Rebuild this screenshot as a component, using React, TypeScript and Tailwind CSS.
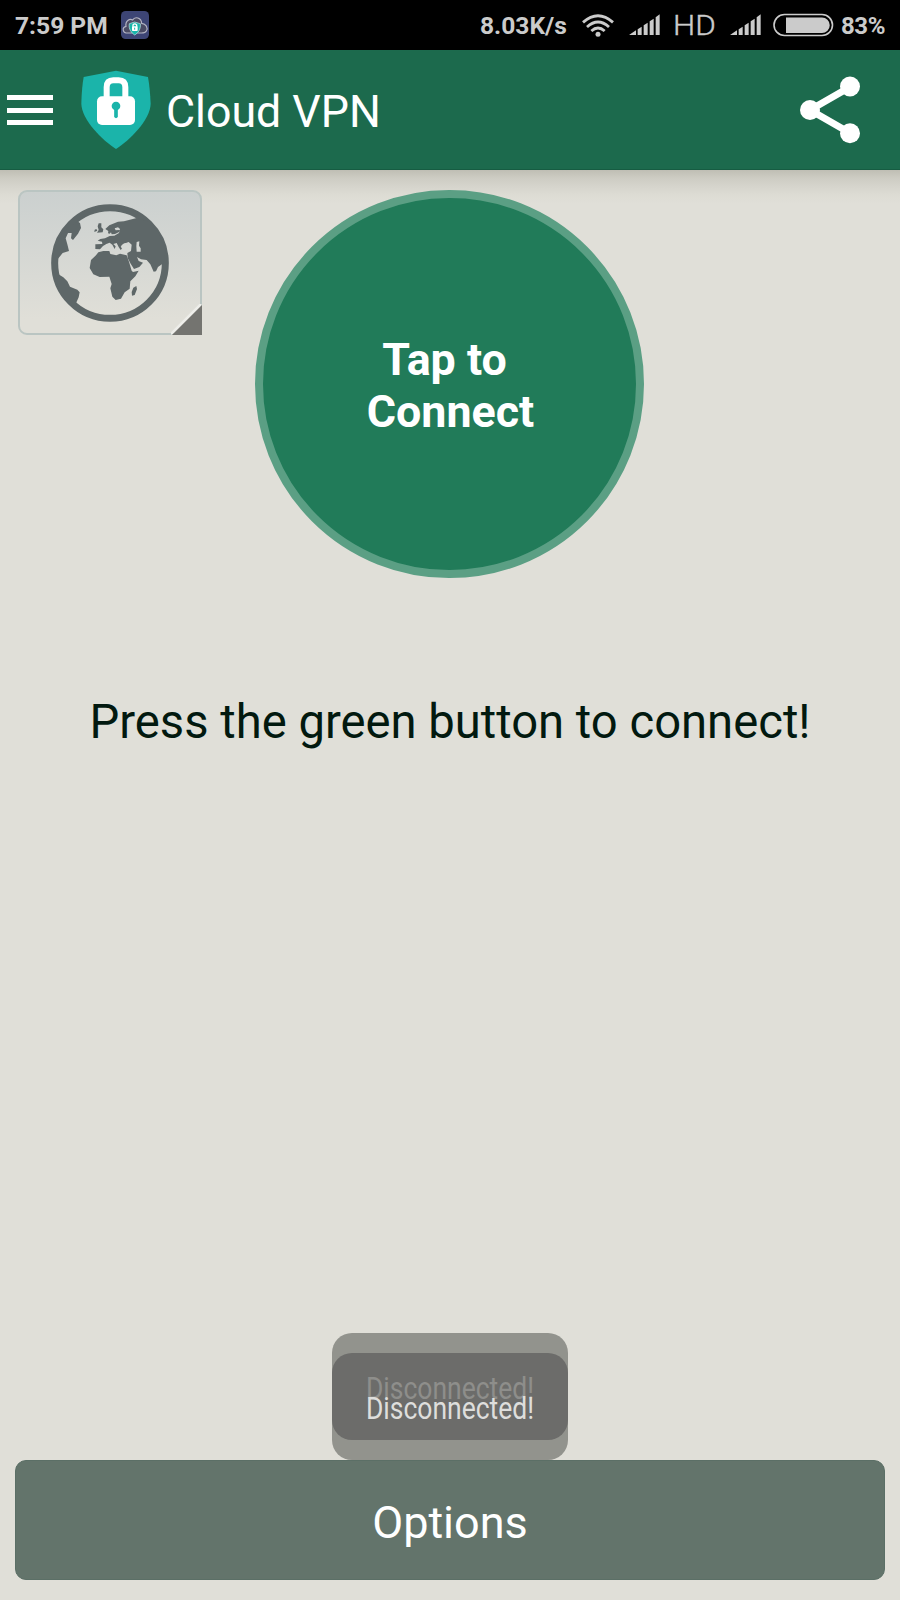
import React from "react";

function Signal() {
  return (
    <svg width="32" height="22" viewBox="0 0 96 66" fill="#cbcbcb">
      <path d="M0 63 L21 49 V63Z M26 46 L38 38 V63 H26Z M44 34 L56 26 V63 H44Z M62 22 L74 14 V63 H62Z M80 10 L92 1 V63 H80Z" />
    </svg>
  );
}

function StatusBar() {
  return (
    <div className="flex h-[50px] w-full shrink-0 items-center bg-black text-[24.6px] font-bold leading-[48px] text-[#cbcbcb]">
      <span className="ml-[15px] w-[106px] whitespace-nowrap pt-[2px]">7:59 PM</span>
      <svg width="28" height="28" viewBox="0 0 84 84" className="shrink-0">
        <rect width="84" height="84" rx="14" fill="#3d4575" />
        <path d="M22 66 C4 67 2 50 15 46 C12 29 26 22 35 27 C42 15 61 20 62 37 C75 38 82 51 76 60 C73 66 68 66 62 66Z" fill="#4a4b64" stroke="#b4b5c4" strokeWidth="3.5" />
        <path d="M25 38 L41 33 L58 38 C60 57 49 67 41 72 C32 66 22 55 25 38Z" fill="#18b5aa" stroke="#c9e8e8" strokeWidth="2" />
        <path d="M36 47 V42 Q41 35 47 42 V47" fill="none" stroke="white" strokeWidth="4" />
        <rect x="33" y="46" width="17" height="14" rx="2" fill="white" />
        <path d="M41 50 V56" stroke="#18b5aa" strokeWidth="3" />
      </svg>
      <span className="ml-[331px] w-[91px] whitespace-nowrap pt-[2px]">8.03K/s</span>
      <svg width="34" height="24" viewBox="0 0 102 72" className="ml-[10px] shrink-0" fill="none" stroke="#cbcbcb" strokeWidth="8.5">
        <path d="M6 28 Q51 -12 96 28 M18 42 Q51 12 84 42 M31 54 Q51 36 71 54" />
        <circle cx="51" cy="64" r="7.5" fill="#cbcbcb" stroke="none" />
      </svg>
      <span className="ml-[14px] w-[32px] shrink-0"><Signal /></span>
      <span className="ml-[12px] w-[46px] shrink-0 whitespace-nowrap pt-[2px]">
        <span className="block w-[40px] origin-left scale-x-[1.12] text-[28px] font-light [-webkit-text-stroke:0.4px_#cbcbcb]">HD</span>
      </span>
      <span className="ml-[11px] w-[32px] shrink-0"><Signal /></span>
      <svg width="61" height="24" viewBox="0 0 61 24" className="ml-[11px] shrink-0">
        <rect x="1" y="1.5" width="58.5" height="21" rx="10.5" fill="none" stroke="#cbcbcb" strokeWidth="1.6" />
        <path d="M13 4.5 H49 A7.5 7.5 0 0 1 49 20 H13Z" fill="#cbcbcb" />
      </svg>
      <span className="ml-[7px] whitespace-nowrap pt-[2px] text-[24px] tracking-[-0.4px]">83%</span>
    </div>
  );
}

function Header() {
  return (
    <header className="flex h-[120px] w-full shrink-0 items-center border-b border-[#165c42] bg-[#1c6a4d]">
      <button className="ml-[7px] mt-px flex w-[46px] flex-col gap-[7.5px]" aria-label="Menu">
        <span className="h-[5px] w-full bg-white" />
        <span className="h-[5px] w-full bg-white" />
        <span className="h-[5px] w-full bg-white" />
      </button>
      <svg width="70" height="80" viewBox="0 0 210 240" className="ml-[28px] shrink-0">
        <path d="M105 2 L201 21 Q207 55 209 101 C208 150 145 211 105 237 C65 211 2 150 1 101 Q2 55 8 21Z" fill="#1bb4aa" />
        <path d="M77 82 V52 Q77 31 97 31 H113 Q133 31 133 52 V82" fill="none" stroke="white" strokeWidth="18" />
        <rect x="48" y="79" width="114" height="86" rx="15" fill="white" />
        <circle cx="105" cy="108" r="13" fill="#1bb4aa" />
        <path d="M105 109 V139" stroke="#1bb4aa" strokeWidth="11" strokeLinecap="round" />
      </svg>
      <h1 className="ml-[15px] whitespace-nowrap pt-[5px] text-[44.7px] leading-[60px] text-white">Cloud VPN</h1>
      <svg width="60" height="68" viewBox="0 0 60 68" className="ml-auto mr-[40px] mt-px shrink-0" fill="white">
        <path d="M50 11 L10 34 L50 57" fill="none" stroke="white" strokeWidth="7" />
        <circle cx="50" cy="10.5" r="10" /><circle cx="10" cy="34" r="10" /><circle cx="50" cy="57.3" r="10" />
      </svg>
    </header>
  );
}

function Globe() {
  return (
    <svg width="118" height="118" viewBox="153 99 354 354" fill="#5e6768">
      <circle cx="330" cy="276" r="166" fill="none" stroke="#5e6768" strokeWidth="21" />
      <path d="M232 151 L240 156 L243 171 L234 188 L219 207 L213 202 L215 186 L204 186 L197 202 L202 220 L207 240 L188 246 L174 263 L171 276 L174 309 L190 319 L202 331 L210 347 L232 356 L239 364 L236 379 L228 397 L215 404 L180 364 L160 300 L160 242 L190 180 Z" />
      <path d="M410 141 L372 151 L354 152 L328 163 L316 174 L325 180 L324 187 L329 188 L333 184 L335 190 L345 189 L357 183 L359 177 L347 178 L344 172 L354 169 L360 174 L357 186 L343 194 L329 195 L315 202 L301 204 L293 209 L306 212 L307 219 L286 220 L286 234 L300 235 L309 225 L319 219 L329 215 L337 221 L344 234 L347 226 L340 219 L350 216 L356 228 L362 237 L368 230 L362 226 L370 219 L386 213 L395 221 L393 240 L382 246 L383 261 L392 278 L402 294 L418 288 L429 275 L416 270 L411 258 L423 265 L440 267 L451 280 L461 302 L468 301 L474 288 L491 276 L497 240 L475 184 L442 151Z" />
      <path d="M310 240 L328 240 L331 249 L349 253 L360 248 L380 253 L387 272 L395 299 L399 303 L416 299 L406 316 L391 331 L389 353 L374 364 L363 383 L347 387 L337 377 L331 352 L335 339 L328 317 L299 318 L280 310 L269 291 L273 267 L288 253 L295 244Z" />
      <path d="M296 157 L304 157 L304 169 L310 175 L308 184 L291 185 L296 177 L293 166Z M284 176 L289 174 L292 179 L283 183Z M409 345 L411 354 L404 372 L396 374 L395 363 L400 350Z" />
      <path d="M369 219 L377 216 L380 222 L393 225 L392 240 L370 240 L363 228Z M410 213 L418 211 L417 224 L422 232 L422 242 L410 242 L409 226Z" fill="#d6d9d5" />
    </svg>
  );
}

export default function App() {
  return (
    <div className="flex h-[1600px] w-[900px] flex-col overflow-hidden bg-[#e0dfd8] font-['Roboto',sans-serif]">
      <StatusBar />
      <Header />
      <main className="flex flex-1 flex-col">
        <div className="flex h-[407px] items-start bg-[linear-gradient(to_bottom,#bfbeb4_0px,#cdccc3_8px,#d5d4cc_16px,#dddcd4_25px,#e0dfd8_34px)] pt-[20px]">
          <button className="relative ml-[18px] flex h-[145px] w-[184px] items-center justify-center rounded-[9px] rounded-br-none border-2 border-[#bac5c2] bg-[linear-gradient(#cbd0cf,#e0dfd8_90%)]" aria-label="Choose location">
            <Globe />
            <svg className="absolute -bottom-[2px] -right-[2px]" width="31" height="31" viewBox="0 0 31 31">
              <path d="M0 30 L30 0" stroke="#eeeeea" strokeWidth="2.5" />
              <path d="M1 31 L31 1 V31Z" fill="#747470" />
            </svg>
          </button>
          <button className="ml-[53px] flex h-[388px] w-[389px] flex-col items-center justify-center rounded-full border-[8px] border-[#5b9f84] bg-[#217b59] pl-[2px] pt-[4px] text-[44.8px] font-bold leading-[52px] text-white">
            <span className="mr-[12px]">Tap to</span>
            <span>Connect</span>
          </button>
        </div>
        <p className="mt-[115px] whitespace-nowrap text-center text-[47.2px] leading-[60px] text-[#02190f]">Press the green button to connect!</p>
        <div className="mt-auto flex justify-center">
          <div className="relative h-[127px] w-[236px] overflow-hidden rounded-[20px] bg-[#92938d]">
            <div className="absolute left-0 top-[20px] h-[87px] w-full rounded-[20px] bg-[#6c6c6a]" />
            <span className="absolute left-0 top-[36px] w-full origin-center scale-x-[0.855] text-center text-[31px] leading-[40px] text-[#8e8e8b]">Disconnected!</span>
            <span className="absolute left-0 top-[56px] w-full origin-center scale-x-[0.855] text-center text-[31px] leading-[40px] text-[#dededc]">Disconnected!</span>
          </div>
        </div>
        <button className="mx-[15px] mb-[20px] h-[120px] shrink-0 rounded-[11px] border border-[#5b6f66] bg-[#63746b] pt-[5px] text-[45px] leading-[60px] text-white">Options</button>
      </main>
    </div>
  );
}
